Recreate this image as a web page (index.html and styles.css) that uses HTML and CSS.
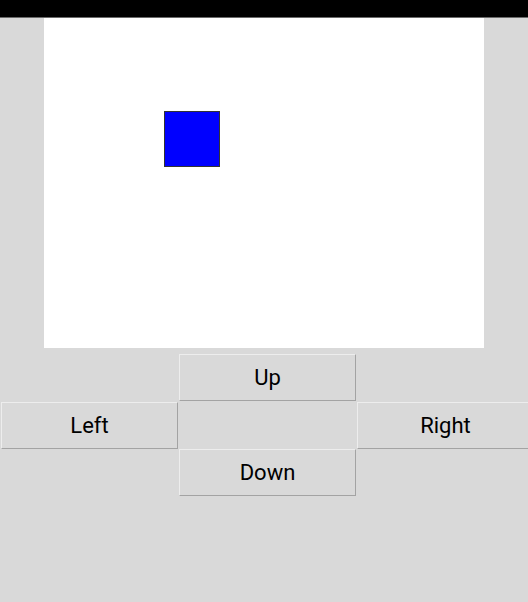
FILE: index.html
```html
<!DOCTYPE html>
<html>
<head>
<meta charset="utf-8">
<link rel="stylesheet" href="styles.css">
</head>
<body>
<div class="titlebar"></div>
<div class="canvas-wrap">
  <div class="canvas">
    <div class="square"></div>
  </div>
</div>
<div class="pad">
  <div class="cell"></div>
  <button class="btn">Up</button>
  <div class="cell"></div>
  <button class="btn">Left</button>
  <div class="cell"></div>
  <button class="btn">Right</button>
  <div class="cell"></div>
  <button class="btn">Down</button>
  <div class="cell"></div>
</div>
</body>
</html>
```
FILE: styles.css
```css
html, body {
  margin: 0;
  padding: 0;
  background: #d9d9d9;
  width: 528px;
  height: 602px;
  overflow: hidden;
  font-family: Roboto, "Liberation Sans", sans-serif;
}
.titlebar {
  height: 17px;
  background: #000;
  border-bottom: 1px solid #6a6a6a;
}
.canvas-wrap {
  display: flex;
  justify-content: center;
}
.canvas {
  position: relative;
  width: 440px;
  height: 330px;
  background: #fff;
}
.square {
  position: absolute;
  left: 120px;
  top: 93px;
  width: 54px;
  height: 54px;
  background: #0000ff;
  border: 1px solid #333;
}
.pad {
  margin-top: 5px;
  display: grid;
  grid-template-columns: 178px 178px 178px;
  grid-template-rows: 48px 47px 48px;
  width: 534px;
}
.btn {
  margin: 1px 0 0 1px;
  padding: 0;
  background: #d9d9d9;
  border: 1px solid;
  border-color: #ededed #a3a3a3 #a3a3a3 #ededed;
  font-family: Roboto, "Liberation Sans", sans-serif;
  font-size: 22px;
  color: #000;
  height: 47px;
}
```
